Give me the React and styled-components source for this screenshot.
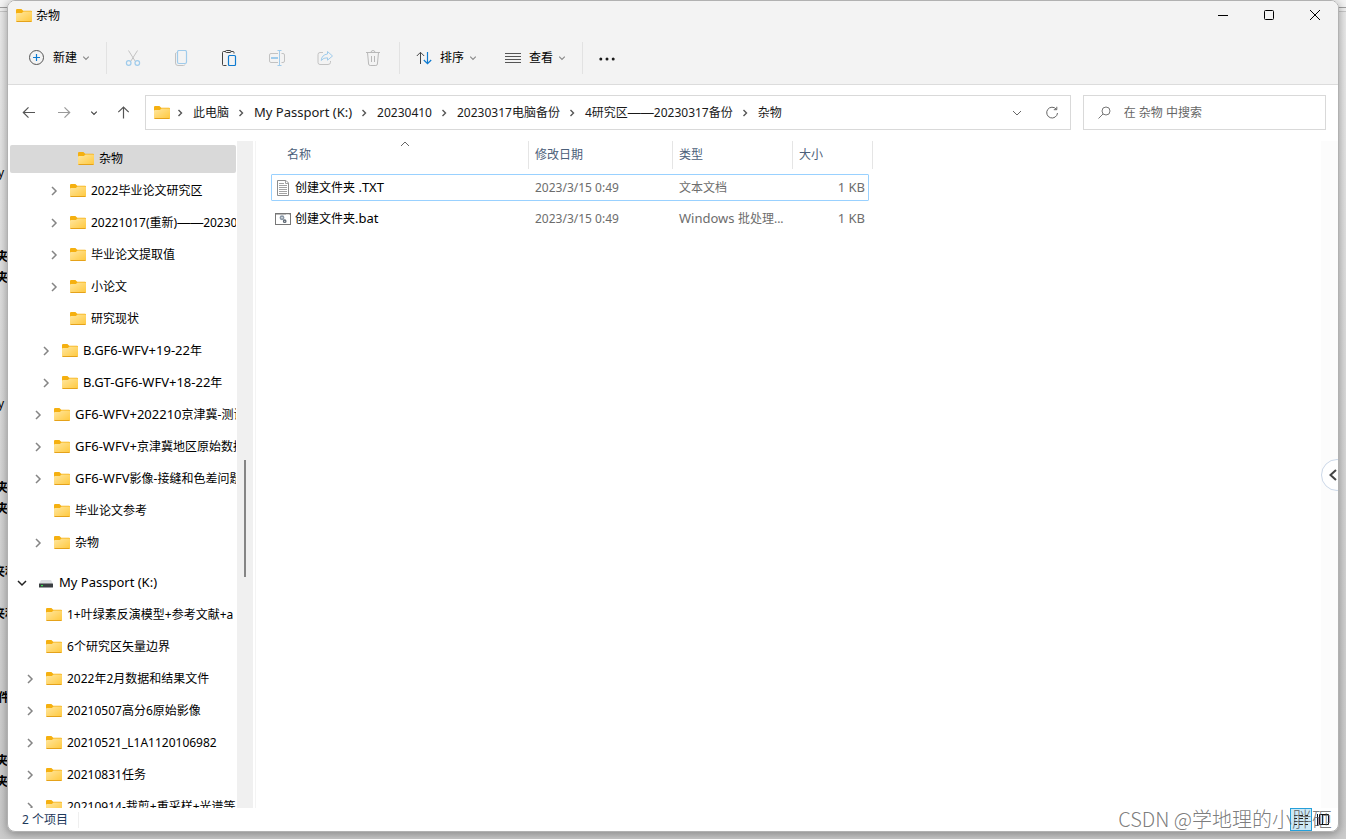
import React from "react";
import styled, { createGlobalStyle } from "styled-components";

const GlobalStyle = createGlobalStyle`
  * { box-sizing: border-box; }
  body {
    margin: 0;
    font-family: "Noto Sans", "Noto Sans CJK SC", sans-serif;
    font-size: 12px;
    line-height: 16px;
    color: #000;
  }
  button {
    font: inherit;
    color: inherit;
    border: 0;
    padding: 0;
    background: none;
  }
`;

/* ---------- mixed-script text ---------- */

const LatinRun = styled.span`
  font-size: 13px;
  line-height: 1;
`;

const DashRun = styled.span`
  font-family: "Liberation Sans", sans-serif;
  font-size: 13px;
  line-height: 1;
`;

/* Latin words are set one size up, so that they stand level with the Han characters. */
const Mixed = ({ text }) =>
  text.split(/(——|[\x20-\x7e]+)/).map((run, i) => {
    if (run === "——") return <DashRun key={i}>{run}</DashRun>;
    if (/^[\x20-\x7e]*[A-Za-z]{2}/.test(run)) return <LatinRun key={i}>{run}</LatinRun>;
    return run;
  });

/* ---------- desktop behind the window ---------- */

const Desktop = styled.div`
  height: 100vh;
  display: grid;
  grid-template-columns: 7px minmax(0, 1fr) 7px;
  background:
    linear-gradient(#f4f4f4, #f4f4f4) 0 0 / 100% 7px no-repeat,
    linear-gradient(#a0a0a0, #a0a0a0) 0 7px / 100% 1px no-repeat,
    linear-gradient(#f0f0f0, #f0f0f0) 0 8px / 100% 3px no-repeat,
    linear-gradient(#c8c8c8, #c8c8c8) 0 11px / 100% 1px no-repeat,
    linear-gradient(#ebebeb, #d6d6d6 60%, #cbcbcb);
`;

const BackPage = styled.div`
  padding-top: 162px;
  overflow: hidden;
`;

const BackLine = styled.div`
  height: 21px;
  line-height: 21px;
  white-space: nowrap;
  text-indent: ${(p) => p.$indent}px;
  font-weight: ${(p) => (p.$light ? 400 : 700)};
`;

/* ---------- window ---------- */

const Window = styled.main`
  position: relative;
  display: flex;
  flex-direction: column;
  height: calc(100vh - 7px);
  border: 1px solid #b1b1b1;
  border-radius: 8px;
  background: #fff;
  overflow: hidden;
`;

const Shadow = styled.div`
  border-radius: 8px;
  height: calc(100vh - 7px);
  box-shadow: 0 2px 8px 1px rgba(0, 0, 0, 0.3);
`;

const TitleBar = styled.header`
  display: flex;
  height: 30px;
  flex: none;
  background: #f3f3f3;
`;

const Title = styled.h1`
  display: flex;
  flex: 1;
  align-items: center;
  gap: 4px;
  margin: 0;
  padding-left: 8px;
  font-size: 12px;
  font-weight: 400;
`;

const CaptionButton = styled.button`
  display: grid;
  place-items: center;
  width: 46px;
  height: 28px;
`;

const CommandBar = styled.div`
  display: flex;
  align-items: center;
  flex: none;
  height: 54px;
  padding-left: 5px;
  background: #f3f3f3;
  border-bottom: 1px solid #dcdcdc;
`;

const Group = styled.div`
  display: flex;
  gap: ${(p) => (p.$icons ? 0 : "12px")};
  padding: 0 ${(p) => (p.$icons ? "2px" : "8px")};
`;

const Divider = styled.span`
  width: 1px;
  height: 32px;
  background: #e2e2e2;
`;

const MenuButton = styled.button`
  display: flex;
  align-items: center;
  height: 32px;
  padding: 0 8px;
`;

const MenuLabel = styled.span`
  margin: 0 5px 0 8px;
`;

const ToolButton = styled.button`
  display: grid;
  place-items: center;
  width: 48px;
  height: 32px;
`;

/* ---------- navigation row ---------- */

const NavRow = styled.div`
  display: flex;
  flex: none;
  height: 56px;
  padding: 10px 12px 11px 3px;
  align-items: center;
`;

const NavButton = styled.button`
  display: grid;
  place-items: center;
  width: ${(p) => (p.$narrow ? "25px" : "35px")};
  height: 32px;
`;

const AddressBar = styled.nav`
  display: flex;
  flex: 1;
  min-width: 0;
  align-items: center;
  height: 35px;
  margin-left: 4px;
  padding-left: 8px;
  border: 1px solid #d9d9d9;
`;

const Crumbs = styled.ol`
  display: flex;
  flex: 1;
  min-width: 0;
  margin: 0;
  padding: 0;
  list-style: none;
  overflow: hidden;
`;

const Crumb = styled.li`
  display: flex;
  align-items: center;
  white-space: nowrap;
  svg { margin: 0 9px 0 8px; }
  &:first-child svg { margin-left: 6px; }
`;

const CrumbLink = styled.a`
  color: #191919;
  text-decoration: none;
`;

const SearchBox = styled.label`
  display: flex;
  align-items: center;
  width: 18.5%;
  height: 35px;
  margin-left: 12px;
  padding-left: 13px;
  gap: 12px;
  border: 1px solid #d9d9d9;
`;

const SearchInput = styled.input`
  flex: 1;
  min-width: 0;
  border: 0;
  padding: 0;
  outline: 0;
  font: inherit;
  background: none;
  &::placeholder { color: #666; opacity: 1; }
`;

/* ---------- body ---------- */

const Body = styled.div`
  display: flex;
  flex: 1;
  min-height: 0;
`;

const Tree = styled.ul`
  width: 229px;
  margin: 0;
  padding: 4px 1px 0 2px;
  list-style: none;
  overflow: hidden;
`;

const TreeItem = styled.li`
  display: flex;
  align-items: center;
  height: 28px;
  margin-bottom: 4px;
  margin-top: ${(p) => (p.$root ? "12px" : 0)};
  padding-left: ${(p) => p.$indent}px;
  border-radius: 2px;
  background: ${(p) => (p.$selected ? "#d9d9d9" : "transparent")};
  white-space: nowrap;
  overflow: hidden;
`;

const Toggle = styled.button`
  display: grid;
  place-items: center;
  flex: none;
  width: 16px;
  height: 16px;
  margin-right: 8px;
`;

const ToggleSpace = styled.span`
  flex: none;
  width: 24px;
`;

const TreeLabel = styled.span`
  margin-left: 5px;
`;

const ScrollTrack = styled.div`
  display: flex;
  flex-direction: column;
  align-items: center;
  width: 16px;
  background: #f0f0f0;
`;

const TrackSpace = styled.div`
  flex: ${(p) => p.$share};
`;

const Thumb = styled.div`
  flex: 117;
  width: 2px;
  background: #858585;
`;

const Pane = styled.section`
  flex: 1;
  min-width: 0;
  margin-left: 2px;
  padding-left: 15px;
  border-left: 1px solid #f4f4f4;
`;

const FileTable = styled.table`
  display: block;
  width: 602px;
`;

const Head = styled.thead`
  display: block;
  margin-bottom: 5px;
`;

const HeadRow = styled.tr`
  display: grid;
  grid-template-columns: 258px 144px 120px 80px;
`;

const HeadCell = styled.th`
  position: relative;
  height: 28px;
  padding: 6px 6px 0;
  padding-left: ${(p) => (p.$first ? "16px" : "6px")};
  border-right: 1px solid #e5e5e5;
  color: #4c607a;
  font-weight: 400;
  text-align: left;
`;

const SortMark = styled.span`
  position: absolute;
  top: 0;
  left: 50%;
  display: flex;
`;

const Rows = styled.tbody`
  display: flex;
  flex-direction: column;
  gap: 4px;
`;

const Row = styled.tr`
  display: grid;
  grid-template-columns: 257px 144px 120px 75px;
  align-items: center;
  width: 598px;
  height: 27px;
  border: 1px solid ${(p) => (p.$focused ? "#99d1ff" : "transparent")};
  border-radius: 1px;
`;

const Cell = styled.td`
  padding: 0 3px 0 6px;
  color: #6d6d6d;
  text-align: ${(p) => (p.$right ? "right" : "left")};
  white-space: nowrap;
`;

const NameCell = styled(Cell)`
  display: flex;
  align-items: center;
  gap: 4px;
  padding-left: 3px;
  color: #000;
`;

const SideRail = styled.aside`
  display: flex;
  align-items: center;
  width: 17px;
  background: #fcfcfc;
  overflow: hidden;
`;

const RailButton = styled.button`
  display: flex;
  align-items: center;
  flex: none;
  width: 32px;
  height: 32px;
  padding-left: 6px;
  border: 1px solid #ccd8e8;
  border-radius: 50%;
  background: #fff;
`;

const StatusBar = styled.footer`
  display: flex;
  align-items: center;
  flex: none;
  height: 23px;
  padding: 0 4px 0 14px;
  color: #1e395b;
`;

const StatusText = styled.span`
  padding-right: 10px;
  border-right: 1px solid #efefef;
  margin-right: auto;
`;

const ViewButton = styled.button`
  display: grid;
  place-items: center;
  width: 22px;
  height: 23px;
  border: 1px solid ${(p) => (p.$active ? "#26a0da" : "transparent")};
  background: ${(p) => (p.$active ? "#cce8f6" : "transparent")};
`;

const Watermark = styled.div`
  position: absolute;
  right: 6px;
  bottom: 0;
  font-family: "Noto Sans CJK SC", sans-serif;
  font-size: 20px;
  font-weight: 300;
  line-height: 24px;
  color: rgba(90, 90, 90, 0.8);
  pointer-events: none;
`;

/* ---------- icons ---------- */

const Svg = ({ w = 16, h = 16, children, ...rest }) => (
  <svg width={w} height={h} viewBox={`0 0 ${w} ${h}`} fill="none" stroke="#444" strokeWidth="1" aria-hidden="true" {...rest}>
    {children}
  </svg>
);

const FolderSvg = styled.svg`
  flex: none;
`;

const Folder = () => (
  <FolderSvg width="16" height="16" viewBox="0 0 16 16" fill="none" aria-hidden="true">
    <defs>
      <linearGradient id="folderFront" x1="0" y1="0" x2="1" y2="1">
        <stop offset="0" stopColor="#ffe7a0" />
        <stop offset="1" stopColor="#ffc83c" />
      </linearGradient>
    </defs>
    <path d="M0 2.1Q0 1 1.1 1H5.4L7.2 2.8H15Q16 2.8 16 3.8V8H0Z" fill="#f5b010" />
    <path d="M0 6Q0 5 1 5H5.8L7.6 3.5H15.2Q16 3.5 16 4.4V13Q16 14 15 14H1Q0 14 0 13Z" fill="url(#folderFront)" />
    <path d="M.5 13.5H15.5" stroke="#e5a21a" />
  </FolderSvg>
);

const ChevDown = ({ color = "#8a8a8a" }) => (
  <Svg w={8} h={8} stroke={color} strokeWidth="1.2"><path d="M1.2 2.7 4 5.5 6.8 2.7" /></Svg>
);

const ChevRight = () => (
  <Svg w={8} h={10} stroke="#555" strokeWidth="1.4"><path d="M2.5 2 5.5 5 2.5 8" /></Svg>
);

const TreeChevron = ({ open }) => (
  <Svg w={10} h={10} stroke={open ? "#222" : "#858585"} strokeWidth="1.5">
    <path d={open ? "M1 3 5 7 9 3" : "M3 1 7 5 3 9"} />
  </Svg>
);

const Drive = () => (
  <Svg stroke="none">
    <path d="M3 5H13L15 9H1Z" fill="#dcdfe1" />
    <rect x="1" y="8.5" width="14" height="4" rx=".5" fill="#3b3f42" />
    <rect x="3" y="10" width="2" height="1.2" fill="#33e04d" />
  </Svg>
);

const TextFile = () => (
  <Svg stroke="#8d8d8d">
    <path d="M2.5 .5H11L13.5 3V15.5H2.5Z" fill="#fff" />
    <path d="M10.5 .5V3.5H13.5M4 3.5H9M4 5.5H12M4 7.5H12M4 9.5H12M4 11.5H12M4 13.5H12" stroke="#a2a2a2" />
  </Svg>
);

const BatFile = () => (
  <Svg stroke="#777">
    <rect x=".5" y="2.5" width="15" height="11" fill="#fff" />
    <path d="M1 3H15" />
    <path d="M11 3.5H14" stroke="#ddd" />
    <circle cx="7" cy="6.8" r="1.6" stroke="#8b98a6" strokeWidth="1.7" />
    <circle cx="9.7" cy="10.2" r="1.2" stroke="#5e6873" strokeWidth="1.3" />
  </Svg>
);

const blue = "#0f7bd0";
const paleBlue = "#9fcbeb";
const paleGray = "#c2c2c2";

const PlusIcon = () => (
  <Svg><circle cx="7.5" cy="7.5" r="7" stroke="#555" /><path d="M7.5 4V11M4 7.5H11" stroke={blue} strokeWidth="1.2" /></Svg>
);
const CutIcon = () => (
  <Svg stroke={paleGray}>
    <path d="M3.5 .5 10.2 11.2M12.5 .5 5.8 11.2" />
    <circle cx="3.7" cy="13" r="2.3" stroke={paleBlue} strokeWidth="1.2" />
    <circle cx="12.3" cy="13" r="2.3" stroke={paleBlue} strokeWidth="1.2" />
  </Svg>
);
const CopyIcon = () => (
  <Svg stroke={paleGray}>
    <path d="M3.5 2.5Q2.5 2.8 2.5 4V13Q2.5 15.5 5 15.5H10.5Q11.7 15.5 12 14.5" />
    <rect x="4.5" y=".5" width="9" height="13" rx="1.5" stroke={paleBlue} strokeWidth="1.2" />
  </Svg>
);
const PasteIcon = () => (
  <Svg>
    <path d="M4.5 1.5H2.5Q1.5 1.5 1.5 2.5V14.5Q1.5 15.5 2.5 15.5H5.5M10 1.5H12Q13 1.5 13 2.5V3.5" />
    <rect x="4.5" y=".5" width="5.5" height="2" rx="1" />
    <rect x="7.5" y="5.5" width="7" height="10" rx="1" stroke={blue} strokeWidth="1.2" />
  </Svg>
);
const RenameIcon = () => (
  <Svg stroke={paleGray}>
    <path d="M9 3.5H2Q.5 3.5 .5 5V11Q.5 12.5 2 12.5H9M12.5 3.5H14Q15.5 3.5 15.5 5V11Q15.5 12.5 14 12.5H12.5" />
    <path d="M8.5 .5H12.5M8.5 15.5H12.5M10.5 .5V15.5" stroke={paleBlue} />
    <path d="M2 8H9" stroke={paleBlue} strokeWidth="1.8" />
  </Svg>
);
const ShareIcon = () => (
  <Svg stroke={paleGray}>
    <path d="M6 2.5H3Q1 2.5 1 4.7V12.3Q1 14.5 3 14.5H11Q13.5 14.5 13.5 12.3V11" />
    <path d="M10.5 1.5 15.5 6 10.5 10.2V7.8Q6.5 7.5 4.2 10.5 4.7 4.8 10.5 4Z" stroke={paleBlue} strokeLinejoin="round" />
  </Svg>
);
const DeleteIcon = () => (
  <Svg stroke="#b8b8b8">
    <path d="M1 2.5H15M6 2.5Q6 .5 8 .5T10 2.5M2.5 2.5 3.6 14Q3.8 15.5 5.2 15.5H10.8Q12.2 15.5 12.4 14L13.5 2.5M6.5 6V12M9.5 6V12" />
  </Svg>
);
const SortIcon = () => (
  <Svg>
    <path d="M4.5 14V2.5M.8 6 4.5 2.3 8.2 6" />
    <path d="M11.5 2V13.5M7.8 10 11.5 13.7 15.2 10" stroke={blue} strokeWidth="1.2" />
  </Svg>
);
const ViewIcon = () => (
  <Svg><path d="M0 3.5H16M0 6.5H16M0 9.5H16M0 12.5H16" stroke="#555" /></Svg>
);
const MoreIcon = () => (
  <Svg fill="#1a1a1a" stroke="none"><circle cx="1.8" cy="9" r="1.5" /><circle cx="8" cy="9" r="1.5" /><circle cx="14.2" cy="9" r="1.5" /></Svg>
);

const tools = [
  ["剪切", CutIcon, true],
  ["复制", CopyIcon, true],
  ["粘贴", PasteIcon, false],
  ["重命名", RenameIcon, true],
  ["共享", ShareIcon, true],
  ["删除", DeleteIcon, true],
];

const crumbs = ["此电脑", "My Passport (K:)", "20230410", "20230317电脑备份", "4研究区——20230317备份", "杂物"];

const tree = [
  { label: "杂物", indent: 44, selected: true },
  { label: "2022毕业论文研究区", indent: 36, toggle: true },
  { label: "20221017(重新)——20230317", indent: 36, toggle: true },
  { label: "毕业论文提取值", indent: 36, toggle: true },
  { label: "小论文", indent: 36, toggle: true },
  { label: "研究现状", indent: 36 },
  { label: "B.GF6-WFV+19-22年", indent: 28, toggle: true },
  { label: "B.GT-GF6-WFV+18-22年", indent: 28, toggle: true },
  { label: "GF6-WFV+202210京津冀-测试", indent: 20, toggle: true },
  { label: "GF6-WFV+京津冀地区原始数据", indent: 20, toggle: true },
  { label: "GF6-WFV影像-接缝和色差问题", indent: 20, toggle: true },
  { label: "毕业论文参考", indent: 20 },
  { label: "杂物", indent: 20, toggle: true },
  { label: "My Passport (K:)", indent: 4, toggle: true, root: true },
  { label: "1+叶绿素反演模型+参考文献+a", indent: 12 },
  { label: "6个研究区矢量边界", indent: 12 },
  { label: "2022年2月数据和结果文件", indent: 12, toggle: true },
  { label: "20210507高分6原始影像", indent: 12, toggle: true },
  { label: "20210521_L1A1120106982", indent: 12, toggle: true },
  { label: "20210831任务", indent: 12, toggle: true },
  { label: "20210914-裁剪+重采样+光谱等", indent: 12, toggle: true },
];

const files = [
  { name: "创建文件夹 .TXT", date: "2023/3/15 0:49", type: "文本文档", size: "1 KB", icon: TextFile, focused: true },
  { name: "创建文件夹.bat", date: "2023/3/15 0:49", type: "Windows 批处理...", size: "1 KB", icon: BatFile },
];

const backText = { 0: "y", 4: "夹", 5: "夹", 11: "y", 15: "夹", 16: "夹", 19: "夹利", 21: "夹利", 25: "文件", 28: "夹", 29: "夹" };
const backIndent = { y: -2, 夹: -4, 夹利: -7, 文件: -14 };

const Menu = ({ icon, label }) => (
  <MenuButton type="button">
    {icon}
    <MenuLabel>{label}</MenuLabel>
    <ChevDown />
  </MenuButton>
);

export default function App() {
  return (
    <Desktop>
      <GlobalStyle />
      <BackPage aria-hidden="true">
        {Array.from({ length: 30 }, (_, i) => (
          <BackLine key={i} $indent={backIndent[backText[i]] || 0} $light={backText[i] === "y"}>
            {backText[i]}
          </BackLine>
        ))}
      </BackPage>

      <Shadow>
        <Window>
          <TitleBar>
            <Title><Folder />杂物</Title>
            <CaptionButton type="button" aria-label="最小化">
              <Svg w={10} h={10} stroke="#000"><path d="M0 5.5H10" /></Svg>
            </CaptionButton>
            <CaptionButton type="button" aria-label="最大化">
              <Svg w={10} h={10} stroke="#000"><rect x=".5" y=".5" width="9" height="9" rx="1" /></Svg>
            </CaptionButton>
            <CaptionButton type="button" aria-label="关闭">
              <Svg w={10} h={10} stroke="#000"><path d="M0 0 10 10M10 0 0 10" /></Svg>
            </CaptionButton>
          </TitleBar>

          <CommandBar>
            <Group><Menu icon={<PlusIcon />} label="新建" /></Group>
            <Divider />
            <Group $icons>
              {tools.map(([label, Icon, off]) => (
                <ToolButton key={label} type="button" aria-label={label} disabled={off}><Icon /></ToolButton>
              ))}
            </Group>
            <Divider />
            <Group>
              <Menu icon={<SortIcon />} label="排序" />
              <Menu icon={<ViewIcon />} label="查看" />
            </Group>
            <Divider />
            <ToolButton type="button" aria-label="更多"><MoreIcon /></ToolButton>
          </CommandBar>

          <NavRow>
            <NavButton type="button" aria-label="后退">
              <Svg><path d="M14 7.5H2.5M7.5 2.3 2.3 7.5 7.5 12.7" stroke="#555" strokeWidth="1.2" /></Svg>
            </NavButton>
            <NavButton type="button" aria-label="前进">
              <Svg><path d="M2 7.5H13.5M8.5 2.3 13.7 7.5 8.5 12.7" stroke="#999" strokeWidth="1.2" /></Svg>
            </NavButton>
            <NavButton type="button" $narrow aria-label="最近位置"><ChevDown color="#444" /></NavButton>
            <NavButton type="button" aria-label="向上">
              <Svg><path d="M7.5 13.5V2M2.3 7.2 7.5 2 12.7 7.2" stroke="#555" strokeWidth="1.2" /></Svg>
            </NavButton>
            <AddressBar aria-label="地址">
              <Folder />
              <Crumbs>
                {crumbs.map((c) => (
                  <Crumb key={c}><ChevRight /><CrumbLink href="#"><Mixed text={c} /></CrumbLink></Crumb>
                ))}
              </Crumbs>
              <NavButton type="button" aria-label="以前的位置">
                <Svg w={10} h={10} stroke="#666"><path d="M1 3 5 7 9 3" /></Svg>
              </NavButton>
              <NavButton type="button" aria-label="刷新">
                <Svg stroke="#666"><path d="M12.3 4.2A5.4 5.4 0 1 0 13.5 8M12.8 1.8V4.7H9.8" /></Svg>
              </NavButton>
            </AddressBar>
            <SearchBox>
              <Svg w={15} h={14} stroke="#777"><circle cx="9" cy="5" r="4" /><path d="M6 8 1.5 12.5" /></Svg>
              <SearchInput type="text" placeholder="在 杂物 中搜索" aria-label="搜索" />
            </SearchBox>
          </NavRow>

          <Body>
            <Tree>
              {tree.map((t, i) => (
                <TreeItem key={i} $indent={t.indent} $selected={t.selected} $root={t.root}>
                  {t.toggle ? (
                    <Toggle type="button" aria-label={t.root ? "折叠" : "展开"}><TreeChevron open={t.root} /></Toggle>
                  ) : (
                    <ToggleSpace />
                  )}
                  {t.root ? <Drive /> : <Folder />}
                  <TreeLabel><Mixed text={t.label} /></TreeLabel>
                </TreeItem>
              ))}
            </Tree>
            <ScrollTrack>
              <TrackSpace $share={319} />
              <Thumb />
              <TrackSpace $share={231} />
            </ScrollTrack>
            <Pane>
              <FileTable>
                <Head>
                  <HeadRow>
                    <HeadCell $first scope="col">
                      名称
                      <SortMark><Svg w={10} h={6} stroke="#666"><path d="M1 5 5 1 9 5" /></Svg></SortMark>
                    </HeadCell>
                    <HeadCell scope="col">修改日期</HeadCell>
                    <HeadCell scope="col">类型</HeadCell>
                    <HeadCell scope="col">大小</HeadCell>
                  </HeadRow>
                </Head>
                <Rows>
                  {files.map(({ icon: Icon, ...f }) => (
                    <Row key={f.name} $focused={f.focused}>
                      <NameCell><Icon /><span><Mixed text={f.name} /></span></NameCell>
                      <Cell>{f.date}</Cell>
                      <Cell><Mixed text={f.type} /></Cell>
                      <Cell $right><Mixed text={f.size} /></Cell>
                    </Row>
                  ))}
                </Rows>
              </FileTable>
            </Pane>
            <SideRail>
              <RailButton type="button" aria-label="展开侧栏">
                <Svg w={10} h={14} stroke="#444" strokeWidth="2"><path d="M8 2 2.5 7 8 12" /></Svg>
              </RailButton>
            </SideRail>
          </Body>

          <StatusBar>
            <StatusText>2 个项目</StatusText>
            <ViewButton type="button" $active aria-label="详细信息">
              <Svg stroke="#222"><path d="M1 3.5H4M6 3.5H10M12 3.5H15M1 6.5H4M6 6.5H10M12 6.5H15M1 9.5H4M6 9.5H10M12 9.5H15M1 12.5H4M6 12.5H10M12 12.5H15" /></Svg>
            </ViewButton>
            <ViewButton type="button" aria-label="大图标">
              <Svg stroke="#111"><path d="M2.5 2V14M4.5 2.5H13.5V12.5H4.5ZM7.5 3V12" /></Svg>
            </ViewButton>
          </StatusBar>
          <Watermark>CSDN @学地理的小胖砸</Watermark>
        </Window>
      </Shadow>
    </Desktop>
  );
}
